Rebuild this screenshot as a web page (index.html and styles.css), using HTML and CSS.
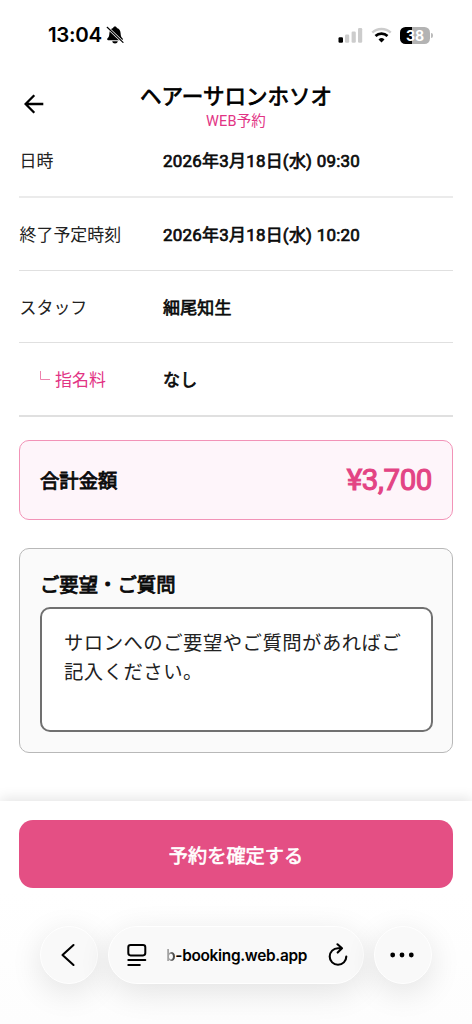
FILE: index.html
```html
<!DOCTYPE html>
<html lang="ja">
<head>
<meta charset="UTF-8">
<meta name="viewport" content="width=device-width, initial-scale=1">
<title>ヘアーサロンホソオ WEB予約</title>
<link rel="stylesheet" href="styles.css">
</head>
<body>
<div class="screen">
  <div class="status">
    <span class="status-time">13:04</span>
    <svg class="bell" width="18" height="19" viewBox="0 0 18 19">
      <path d="M9 .5c1.100 0 1.800.7 1.900 1.600 2.500.7 3.600 2.700 3.700 5.100.1 2.900.7 3.900 1.900 5.100.7.8.3 2-.7 2H2.200c-1 0-1.400-1.200-.7-2C2.700 11.100 3.300 10.100 3.400 7.200c.1-2.400 1.200-4.400 3.700-5.100C7.200 1.200 7.900.5 9 .5z" fill="#000"/>
      <path d="M6.200 15.300h5.600c-.3 1.400-1.400 2.200-2.800 2.200s-2.500-.8-2.800-2.200z" fill="#000"/>
      <path d="M1.200 1.300 17 16.400" stroke="#fff" stroke-width="2.600"/>
      <path d="M1.200 1.300 17 16.400" stroke="#000" stroke-width="1.200" stroke-linecap="round"/>
    </svg>
    <div class="status-right">
      <svg width="25" height="17" viewBox="0 0 25 17">
        <rect x="0.500" y="10.300" width="4.500" height="5.500" rx="1.200" fill="#000"/>
        <g fill="#ccc"><rect x="7" y="7.500" width="4.200" height="8.300" rx="1.200"/><rect x="13.600" y="4.500" width="4.200" height="11.300" rx="1.200"/><rect x="20" y="1" width="4.200" height="14.800" rx="1.200"/></g>
      </svg>
      <svg class="wifi" width="21" height="17" viewBox="0 0 21 17">
        <path d="M1.300 5.600a13.400 13.400 0 0 1 18.400 0" fill="none" stroke="#ccc" stroke-width="2.500"/>
        <path d="M4.500 9.100a8.700 8.700 0 0 1 12 0" fill="none" stroke="#000" stroke-width="2.700"/>
        <path d="M7.500 12.400a4.400 4.400 0 0 1 6 0l-3 3.100z" fill="#000"/>
      </svg>
      <div class="battery"><span>38</span></div><i class="battery-tip"></i>
    </div>
  </div>

  <header class="header">
    <svg class="back" width="20" height="20" viewBox="0 0 20 20" fill="none" stroke="#000" stroke-width="2.300"><path d="M19.300 10H2M10.300 1.200 1.600 10l8.700 8.800"/></svg>
    <div class="heading"><h1>ヘアーサロンホソオ</h1><p>WEB予約</p></div>
  </header>

  <main class="content">
    <dl class="details">
      <div class="row first"><dt>日時</dt><dd>2026年3月18日(水) 09:30</dd></div>
      <div class="row"><dt>終了予定時刻</dt><dd>2026年3月18日(水) 10:20</dd></div>
      <div class="row staff"><dt>スタッフ</dt><dd>細尾知生</dd></div>
      <div class="row fee"><dt><svg width="10" height="10" viewBox="0 0 10 10" fill="none" stroke="#ed82ad"><path d="M.5 0v8.500H10"/></svg>指名料</dt><dd>なし</dd></div>
    </dl>
    <section class="total"><span>合計金額</span><strong>¥3,700</strong></section>
    <section class="request">
      <h2>ご要望・ご質問</h2>
      <div class="textarea">サロンへのご要望やご質問があればご記入ください。</div>
    </section>
  </main>

  <footer class="footer">
    <div class="confirm">予約を確定する</div>
    <nav class="browser">
      <div class="glass round"><svg width="14" height="24" viewBox="0 0 14 24" fill="none" stroke="#000" stroke-width="2.100" stroke-linecap="round" stroke-linejoin="round"><path d="M12.500 2 1.500 12l11 10"/></svg></div>
      <div class="glass address">
        <svg width="20" height="24" viewBox="0 0 20 24" fill="none" stroke="#000" stroke-width="2" stroke-linecap="round"><rect x="1.300" y="2" width="17" height="10.400" rx="2.300"/><path d="M1.300 17h17M1.300 22h11.500"/></svg>
        <span class="url"><span class="url-fade">b</span>-booking.web.app</span>
        <svg class="reload" width="20" height="24" viewBox="0 0 20 24" fill="none" stroke="#000" stroke-width="2.100" stroke-linecap="round" stroke-linejoin="round"><path d="M13.500 5.200H10a8.300 8.300 0 1 0 8.300 8.300M9.500 1.300l4.500 4-4.300 4.300"/></svg>
      </div>
      <div class="glass round"><svg width="24" height="6" viewBox="0 0 24 6"><circle cx="2.700" cy="3" r="2.400"/><circle cx="12" cy="3" r="2.400"/><circle cx="21.300" cy="3" r="2.400"/></svg></div>
    </nav>
  </footer>
</div>
</body>
</html>
```

FILE: styles.css
```css
* { box-sizing: border-box; }
body { margin: 0; background: #fff; color: #0b0b0b; font-family: Roboto, "Noto Sans CJK JP", sans-serif; }
h1, h2, p, dl, dd { margin: 0; }
svg { display: block; flex: none; }
.screen { width: 472px; height: 1024px; display: flex; flex-direction: column; overflow: hidden; }

.status { height: 70px; flex: none; display: flex; align-items: center; padding: 0 39px 0 48px; color: #000; }
.status-time { font: 600 20.5px/24px Inter, sans-serif; letter-spacing: -.3px; width: 58px; }
.bell { margin-top: 1px; }
.status-right { margin-left: auto; display: flex; align-items: center; }
.wifi { margin: 0 8px 0 8px; }
.battery { width: 30px; height: 17px; border-radius: 5.5px; background: linear-gradient(90deg, #000 39%, #b3b3b3 39%); color: #fff; font: 700 14px/17px Inter, sans-serif; text-align: center; }
.battery-tip { width: 2px; height: 5px; margin-left: 1px; border-radius: 0 2px 2px 0; background: #bbb; }

.header { height: 66px; flex: none; display: grid; grid-template-columns: 20px 1fr 20px; padding: 0 24px; }
.back { margin-top: 24px; }
.heading { text-align: center; padding-top: 11px; color: #000; }
.heading h1 { font-size: 21.5px; line-height: 31px; font-weight: 400; -webkit-text-stroke: .8px; white-space: nowrap; }
.heading p { font-size: 14.5px; line-height: 19px; letter-spacing: .15px; color: #e23384; }

.content { flex: 1; padding: 0 19px; }
.row { display: flex; align-items: center; height: 73px; padding-top: 1px; border-bottom: 1px solid #e0e0e0; font-size: 16.94px; line-height: 24px; }
.row dt { width: 144px; padding-left: .5px; color: #222; white-space: nowrap; }
.row dd { font-weight: 400; -webkit-text-stroke: .7px; letter-spacing: .24px; }
.row.first { height: 62px; padding-bottom: 12px; border-bottom: 2px solid #ebebeb; }
.row.staff { height: 72px; padding-top: 3px; }
.row.fee { height: 74px; border-bottom: 2px solid #e0e0e0; }
.row.fee dt { display: flex; align-items: center; gap: 5px; padding-left: 21px; color: #e23384; }
.row.fee svg { margin-top: -7px; }

.total { margin-top: 23px; height: 80px; border: 1px solid #f293b7; border-radius: 10px; background: #fef5fa; display: flex; align-items: center; justify-content: space-between; padding: 0 20px; }
.total span { font-size: 19.36px; -webkit-text-stroke: .85px; }
.total strong { font-size: 29.5px; font-weight: 400; -webkit-text-stroke: 1.1px; color: #e34484; letter-spacing: -.4px; }
.request { margin-top: 28px; height: 205px; border: 1px solid #b8b8b8; border-radius: 10px; background: #fafafa; padding: 22px 19px 20px 20px; }
.request h2 { font-size: 19.36px; line-height: 29px; font-weight: 400; -webkit-text-stroke: .85px; }
.textarea { height: 125px; margin-top: 7px; border: 2px solid #707070; border-radius: 10px; background: #fff; padding: 20px 22px; font-size: 19.36px; line-height: 29px; letter-spacing: .48px; color: #222; }

.footer { height: 223px; flex: none; padding: 19px 19px 0; background: linear-gradient(#fff 40%, #fdfdfd); box-shadow: 0 -3px 12px rgba(0,0,0,.1); }
.confirm { height: 68px; border-radius: 14px; background: #e44f84; color: #fff; display: flex; align-items: center; justify-content: center; padding-top: 2px; font-size: 19.2px; -webkit-text-stroke: .65px; }
.browser { display: flex; justify-content: center; gap: 10px; margin-top: 38px; }
.glass { height: 58px; border-radius: 29px; border: 1px solid #fff; background: #f9f9f9; box-shadow: 0 8px 32px rgba(0,0,0,.11); display: flex; align-items: center; justify-content: center; }
.round { width: 58px; padding-right: 2px; }
.address { width: 256px; justify-content: flex-start; padding-left: 18px; }
.url { width: 143px; margin-left: 19px; padding-top: 1px; color: #000; font: 600 15.4px/24px Inter, sans-serif; white-space: nowrap; letter-spacing: -.3px; }
.url-fade { color: transparent; background: linear-gradient(90deg, #ccc, #333); background-clip: text; -webkit-background-clip: text; }
.reload { margin-left: 19px; }
```
